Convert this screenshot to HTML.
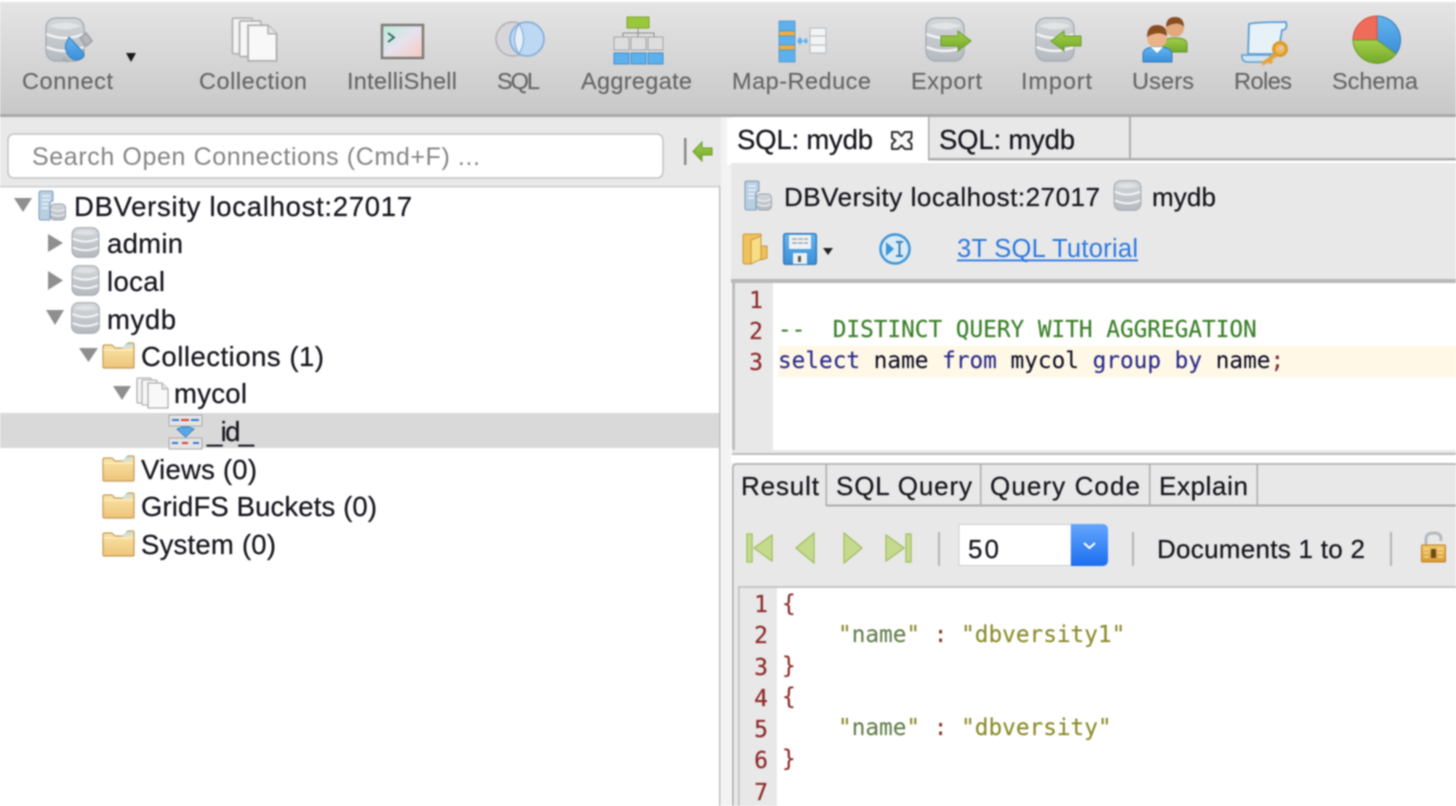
<!DOCTYPE html>
<html><head><meta charset="utf-8"><title>3T Studio</title>
<style>
html,body{margin:0;padding:0;background:#fff;width:1456px;height:806px;overflow:hidden}
svg{display:block;filter:blur(.7px)}
text{font-family:"Liberation Sans",sans-serif;white-space:pre}
.tb{font-size:23.5px;fill:#666667;stroke:#666667;stroke-width:.15px}
.t{font-size:27.5px;fill:#17171f;stroke:#17171f;stroke-width:.25px}
.t2{font-size:26px}
.m{font-family:"DejaVu Sans Mono","Liberation Mono",monospace;font-size:22.72px;stroke:currentColor;stroke-width:.15px}
.ln{fill:#8e2a2a;font-family:"DejaVu Sans Mono","Liberation Mono",monospace;font-size:23px;text-anchor:end;stroke:#8e2a2a;stroke-width:.2px}
</style></head><body>
<svg width="1456" height="806" viewBox="0 0 1456 806" xmlns="http://www.w3.org/2000/svg">
<defs>
<linearGradient id="tbg" x1="0" y1="0" x2="0" y2="1"><stop offset="0" stop-color="#e5e4e5"/><stop offset="1" stop-color="#c8c8c8"/></linearGradient>
<linearGradient id="silver" x1="0" y1="0" x2="0" y2="1"><stop offset="0" stop-color="#d4d7da"/><stop offset="1" stop-color="#b4bac0"/></linearGradient>
<linearGradient id="foldgrad" x1="0" y1="0" x2="0" y2="1"><stop offset="0" stop-color="#fbe6ad"/><stop offset="1" stop-color="#edc477"/></linearGradient>
<linearGradient id="green" x1="0" y1="0" x2="0" y2="1"><stop offset="0" stop-color="#a3cf4a"/><stop offset="1" stop-color="#72a92a"/></linearGradient>
<linearGradient id="blue" x1="0" y1="0" x2="0" y2="1"><stop offset="0" stop-color="#63b4ee"/><stop offset="1" stop-color="#3c8fd8"/></linearGradient>
<linearGradient id="combo" x1="0" y1="0" x2="0" y2="1"><stop offset="0" stop-color="#63a6fb"/><stop offset="1" stop-color="#1c6ef0"/></linearGradient>
<linearGradient id="shell" x1="0" y1="0" x2="1" y2="1"><stop offset="0" stop-color="#b9ecd9"/><stop offset=".5" stop-color="#e6e2ee"/><stop offset="1" stop-color="#f8c9bd"/></linearGradient>
<linearGradient id="gold" x1="0" y1="0" x2="0" y2="1"><stop offset="0" stop-color="#f1c662"/><stop offset="1" stop-color="#d99a36"/></linearGradient>

<symbol id="db" viewBox="0 0 29 32">
<rect x=".7" y=".7" width="27.6" height="30.6" rx="7" fill="url(#silver)" stroke="#a6acb2" stroke-width="1.2"/>
<path d="M3 6Q14.5 1 26 6Q14.5 11 3 6Z" fill="#dfe1e3"/>
<path d="M1.5 12Q14.5 18 27.5 12" fill="none" stroke="#f4f5f6" stroke-width="2"/>
<path d="M1.5 21Q14.5 27 27.5 21" fill="none" stroke="#f4f5f6" stroke-width="2"/>
</symbol>

<symbol id="bigdb" viewBox="0 0 40 45">
<rect x="1" y="1" width="38" height="43" rx="10" fill="url(#silver)" stroke="#a6acb2" stroke-width="1.4"/>
<path d="M4 9Q20 2 36 9Q20 16 4 9Z" fill="#e1e3e5"/>
<path d="M1.5 17Q20 25 38.5 17" fill="none" stroke="#f2f3f4" stroke-width="2.5"/>
<path d="M1.5 30Q20 38 38.5 30" fill="none" stroke="#f2f3f4" stroke-width="2.5"/>
</symbol>

<symbol id="folder" viewBox="0 0 33 27">
<path d="M1 4.5Q1 3 3 3H10L13 6H21L26 1H31Q32 1 32 3V25Q32 26 31 26H2Q1 26 1 25Z" fill="url(#foldgrad)" stroke="#c49b58" stroke-width="1.2"/>
<path d="M19 6L25 2H31V4L24 6Z" fill="#bfe3ee"/>
<path d="M1.5 8H31.5" stroke="#fff3cf" stroke-width="1"/>
</symbol>

<symbol id="server" viewBox="0 0 28 31">
<path d="M1 3Q1 1 3 1H13Q15 1 15 3V11H14Q12 12 12 15V30H3Q1 30 1 28Z" fill="#b8cfe2" stroke="#7f9db8"/>
<path d="M4 6H12M4 10H12M4 14H10M4 18H10" stroke="#edf3f8" stroke-width="1.6"/>
<rect x="12.5" y="14" width="15" height="16" rx="4" fill="url(#silver)" stroke="#94a3b0"/>
<path d="M13 19Q20 23 27 19M13 24Q20 28 27 24" fill="none" stroke="#eef0f2" stroke-width="1.2"/>
</symbol>

<symbol id="docs" viewBox="0 0 33 32">
<rect x="1" y="1" width="14" height="25" rx="1" fill="#f3f3f3" stroke="#b4b4b4" stroke-width="1.3"/>
<rect x="6" y="3" width="15" height="25" rx="1" fill="#f6f6f6" stroke="#b4b4b4" stroke-width="1.3"/>
<path d="M12 6H26L32 12V31H12Z" fill="#f8f8f8" stroke="#aeaeae" stroke-width="1.3"/>
<path d="M26 6V12H32" fill="#e3e3e3" stroke="#aeaeae"/>
</symbol>

<symbol id="arrowr" viewBox="0 0 32 22">
<path d="M1 6H18V1L31 11L18 21V16H1Z" fill="url(#green)" stroke="#6a9a2c" stroke-width="1"/>
</symbol>
</defs>

<!-- page base -->
<rect width="1456" height="806" fill="#fff"/>

<!-- toolbar -->
<rect x="0" y="2" width="1456" height="112" fill="url(#tbg)"/>
<rect x="0" y="114" width="1456" height="3" fill="#a9a9a9"/>

<!-- left panel head -->
<rect x="0" y="117" width="721" height="69" fill="#e9e9e9"/>
<rect x="8" y="134" width="655" height="44" rx="6" fill="#fff" stroke="#c4c4c4" stroke-width="1.5"/>
<text x="32" y="165" font-size="25" fill="#858585" textLength="448">Search Open Connections (Cmd+F) ...</text>
<rect x="684" y="138" width="2.5" height="27" fill="#8a8a8a"/>
<g transform="translate(692,141)"><path d="M20 7H10V1L1 10.500L10 20V14H20Z" fill="url(#green)" stroke="#6a9a2c"/></g>

<!-- tree -->
<rect x="0" y="186" width="720" height="1.5" fill="#cfcfcf"/>
<rect x="719" y="186" width="1.5" height="620" fill="#bdbdbd"/>
<rect x="721" y="117" width="10" height="689" fill="#f3f3f3"/>
<rect x="0" y="413" width="719" height="35" fill="#d9d9d9"/>

<g fill="#8f8f8f">
<path d="M14 198H32L23 212Z"/>
<path d="M48 234L63 243L48 252Z"/>
<path d="M48 271L63 280.500L48 290Z"/>
<path d="M46 310H64L55 325Z"/>
<path d="M79 348H98L88.500 362Z"/>
<path d="M113 386H131L122 400Z"/>
</g>

<use href="#server" x="38" y="190" width="28" height="31"/>
<use href="#db" x="71" y="227" width="29" height="31"/>
<use href="#db" x="71" y="265" width="29" height="31"/>
<use href="#db" x="71" y="302" width="29" height="32"/>
<use href="#folder" x="102" y="342" width="33" height="27"/>
<use href="#docs" x="136" y="377" width="33" height="32"/>
<use href="#folder" x="102" y="455" width="33" height="27"/>
<use href="#folder" x="102" y="492" width="33" height="27"/>
<use href="#folder" x="102" y="530" width="33" height="27"/>

<!-- index icon -->
<g transform="translate(169,415)">
<rect x="0" y="0" width="33" height="11" fill="#e4e4e4" stroke="#a8a8a8"/>
<rect x="0" y="23" width="33" height="11" fill="#e4e4e4" stroke="#a8a8a8"/>
<path d="M3 5H10M22 5H30M3 28H9M24 28H30" stroke="#2f78d6" stroke-width="2"/>
<path d="M12 5H20M13 28H19" stroke="#e03a3a" stroke-width="2"/>
<path d="M8 14L16.500 22L25 14L20 12H13Z" fill="#5aa7e6" stroke="#3b84c4"/>
</g>

<text class="t" x="74" y="216" textLength="338">DBVersity localhost:27017</text>
<text class="t" x="107" y="253" textLength="76">admin</text>
<text class="t" x="107" y="291" textLength="58">local</text>
<text class="t" x="107" y="329" textLength="69">mydb</text>
<text class="t" x="141" y="366" textLength="183">Collections (1)</text>
<text class="t" x="174" y="403" textLength="73">mycol</text>
<text class="t" x="207" y="441" textLength="47">_id_</text>
<text class="t" x="141" y="479" textLength="116">Views (0)</text>
<text class="t" x="141" y="516" textLength="236">GridFS Buckets (0)</text>
<text class="t" x="141" y="554" textLength="135">System (0)</text>

<!-- right: tabs -->
<rect x="928" y="117" width="528" height="41" fill="#e8e8e8"/>
<rect x="928" y="158" width="528" height="2.5" fill="#adadad"/>
<rect x="1129" y="117" width="2" height="41" fill="#adadad"/>
<rect x="928" y="117" width="1.5" height="43" fill="#adadad"/>
<path d="M727 165V118H924Q927 118 927 121V165Z" fill="#fff"/>
<rect x="731" y="163" width="725" height="117" fill="#e8e8e8"/>
<rect x="731" y="279" width="725" height="4" fill="#b9b9b9"/>
<text class="t" x="737" y="149" textLength="136">SQL: mydb</text>
<text class="t" x="939" y="149" textLength="136">SQL: mydb</text>
<path d="M892 132H898L901.500 136L905 132H911.500V138L908 140.500L911.500 144V149H905L901.500 145.500L898 149H892V144L895.500 140.500L892 138Z" fill="#fafafa" stroke="#333" stroke-width="2" stroke-linejoin="round"/>

<use href="#server" x="744" y="180" width="28" height="31"/>
<text class="t t2" x="784" y="206" textLength="316">DBVersity localhost:27017</text>
<use href="#db" x="1113" y="180" width="29" height="31"/>
<text class="t t2" x="1152" y="206" textLength="64">mydb</text>

<!-- editor toolbar icons -->
<g transform="translate(742,233)">
<path d="M1 3Q1 1 3 1H19V23L8 31H3Q1 31 1 29Z" fill="#f0c25c" stroke="#c9973c"/>
<path d="M9 7L19 3V26L9 31Z" fill="#f8dd84" stroke="#c9973c"/>
<path d="M19 13H25V25L19 27Z" fill="#eec05a" stroke="#c9973c"/>
</g>
<g transform="translate(783,233)">
<rect x=".7" y=".7" width="32.600" height="30.600" rx="2" fill="url(#blue)" stroke="#2c76b8" stroke-width="1.400"/>
<rect x="6" y="2" width="22" height="14" fill="#f0f2f4"/>
<path d="M9 6H25M9 10H25" stroke="#9aa2aa" stroke-width="1.600" stroke-dasharray="5 1"/>
<rect x="10" y="20" width="14" height="11" fill="#eef0f2"/>
<rect x="15" y="23" width="3" height="6" fill="#555"/>
</g>
<path d="M823 248H833L828 255Z" fill="#222"/>
<g transform="translate(879,233)">
<circle cx="16" cy="16" r="14.500" fill="#d7ebf8" stroke="#3f95d6" stroke-width="2.500"/>
<path d="M7 9L15 16L7 23Z" fill="#3f95d6"/>
<path d="M17 9H24M20.500 9V23M17 23H24" stroke="#3f7fb6" stroke-width="2" fill="none"/>
</g>
<text x="957" y="257" font-size="25.500" fill="#2d78e0" textLength="181">3T SQL Tutorial</text>
<rect x="957" y="259.500" width="181" height="1.800" fill="#2d78e0"/>

<!-- sql editor -->
<rect x="732" y="283" width="3" height="172" fill="#bcbcbc"/>
<rect x="735" y="283" width="38" height="167" fill="#e8e8e8"/>
<rect x="773" y="283" width="683" height="167" fill="#fff"/>
<rect x="732" y="450" width="724" height="3" fill="#e8e8e8"/>
<rect x="732" y="453" width="724" height="2" fill="#bcbcbc"/>
<rect x="778" y="346" width="678" height="31" fill="#fff8e6"/>
<text class="ln" x="763" y="308">1</text>
<text class="ln" x="763" y="339">2</text>
<text class="ln" x="763" y="370">3</text>
<text class="m" x="778" y="337" fill="#3a7f28" color="#3a7f28">--  DISTINCT QUERY WITH AGGREGATION</text>
<text class="m" x="778" y="368" fill="#2b2b8c" color="#2b2b8c">select <tspan fill="#101018">name</tspan> from <tspan fill="#101018">mycol</tspan> group by <tspan fill="#101018">name</tspan><tspan fill="#8e2a2a">;</tspan></text>

<!-- result tabs -->
<rect x="732" y="463" width="724" height="343" fill="#e8e8e8"/>
<path d="M732.800 806V468Q732.800 464 737 464H1456" fill="none" stroke="#adadad" stroke-width="1.600"/>
<rect x="826" y="504.500" width="630" height="2" fill="#adadad"/>
<rect x="825.500" y="464" width="1.500" height="42" fill="#adadad"/>
<rect x="980" y="464" width="1.500" height="41" fill="#adadad"/>
<rect x="1149" y="464" width="1.500" height="41" fill="#adadad"/>
<rect x="1256.500" y="464" width="1.500" height="41" fill="#adadad"/>
<text class="t t2" x="741" y="495" textLength="78">Result</text>
<text class="t t2" x="836" y="495" textLength="136">SQL Query</text>
<text class="t t2" x="990" y="495" textLength="150">Query Code</text>
<text class="t t2" x="1159" y="495" textLength="89">Explain</text>

<!-- pager -->
<g fill="#c6da8e" stroke="#a9c26c" stroke-width="1.500" stroke-linejoin="round">
<rect x="747" y="534" width="5" height="28"/>
<path d="M772 535V561L754 548Z"/>
<path d="M814 533V563L796 548Z"/>
<path d="M844 533V563L862 548Z"/>
<path d="M886 535V561L904 548Z"/>
<rect x="906" y="534" width="5" height="28"/>
</g>
<rect x="938" y="532" width="2" height="34" fill="#b4b4b4"/>
<rect x="959" y="524.500" width="112" height="41" fill="#fff" stroke="#cfcfcf"/>
<path d="M1071 524H1102Q1108 524 1108 530V560Q1108 566 1102 566H1071Z" fill="url(#combo)"/>
<path d="M1084 543L1089.500 548L1095 543" fill="none" stroke="#fff" stroke-width="2"/>
<text class="t t2" x="968" y="558" textLength="31">50</text>
<rect x="1132" y="532" width="2" height="34" fill="#b4b4b4"/>
<text class="t t2" x="1157" y="558" textLength="208">Documents 1 to 2</text>
<rect x="1390" y="532" width="2" height="34" fill="#b4b4b4"/>
<path d="M1426 546V539Q1426 533 1434 533Q1441 533 1441 539V541" fill="none" stroke="#b5bac0" stroke-width="3"/>
<rect x="1421.500" y="545" width="24" height="17" rx="1" fill="url(#gold)" stroke="#b8802c"/>
<rect x="1431" y="549" width="5" height="9" fill="#6a4a1a"/>
<path d="M1424 549H1429M1424 553H1429M1424 557H1429M1438 549H1443M1438 553H1443M1438 557H1443" stroke="#f7dc96" stroke-width="1.200"/>

<!-- result editor -->
<rect x="738" y="586" width="718" height="220" fill="#fff"/>
<rect x="738" y="586" width="718" height="2" fill="#c6c6c6"/>
<rect x="738" y="586" width="1.800" height="220" fill="#c2c2c2"/>
<rect x="740" y="588" width="37" height="218" fill="#e8e8e8"/>
<text class="ln" x="768" y="612">1</text>
<text class="ln" x="768" y="643">2</text>
<text class="ln" x="768" y="675">3</text>
<text class="ln" x="768" y="706">4</text>
<text class="ln" x="768" y="737">5</text>
<text class="ln" x="768" y="768">6</text>
<text class="ln" x="768" y="800">7</text>
<text class="m" x="782" y="611" fill="#8e2a2a" color="#8e2a2a">{</text>
<text class="m" x="838" y="642" fill="#8c8c2c" color="#8c8c2c">"<tspan fill="#5f7f58">name</tspan>" <tspan fill="#8e2a2a">:</tspan> "dbversity1"</text>
<text class="m" x="782" y="673" fill="#8e2a2a" color="#8e2a2a">}</text>
<text class="m" x="782" y="704" fill="#8e2a2a" color="#8e2a2a">{</text>
<text class="m" x="838" y="735" fill="#8c8c2c" color="#8c8c2c">"<tspan fill="#5f7f58">name</tspan>" <tspan fill="#8e2a2a">:</tspan> "dbversity"</text>
<text class="m" x="782" y="766" fill="#8e2a2a" color="#8e2a2a">}</text>

<!-- toolbar labels -->
<text class="tb" x="22" y="89" textLength="91">Connect</text>
<text class="tb" x="199" y="89" textLength="108">Collection</text>
<text class="tb" x="347" y="89" textLength="110">IntelliShell</text>
<text class="tb" x="497" y="89" textLength="43">SQL</text>
<text class="tb" x="581" y="89" textLength="111">Aggregate</text>
<text class="tb" x="732" y="89" textLength="139">Map-Reduce</text>
<text class="tb" x="911" y="89" textLength="71">Export</text>
<text class="tb" x="1021" y="89" textLength="71">Import</text>
<text class="tb" x="1132" y="89" textLength="62">Users</text>
<text class="tb" x="1234" y="89" textLength="58">Roles</text>
<text class="tb" x="1332" y="89" textLength="86">Schema</text>

<!-- Connect -->
<use href="#bigdb" x="45" y="17" width="40" height="45"/>
<path d="M80 38L86 33L92 41L86 46ZM63 58L68 62" stroke="#a4a8ac" stroke-width="2" fill="#b4b8bc"/>
<path d="M69 37L83 52Q86 56 81 59Q74 62 69 56Q64 50 66 43Z" fill="url(#blue)" stroke="#3b7fbc"/>
<path d="M126 53H136L131 62Z" fill="#1a1a1a"/>

<!-- Collection -->
<use href="#docs" x="231" y="16" width="47" height="47"/>

<!-- IntelliShell -->
<rect x="382" y="25" width="41" height="33" fill="url(#shell)" stroke="#807c78" stroke-width="2.500"/>
<path d="M388 33L394 37.500L388 42" fill="none" stroke="#2d6a5a" stroke-width="1.800"/>
<rect x="381" y="60" width="43" height="1.500" fill="#d8d8d8"/>

<!-- SQL -->
<ellipse cx="513" cy="39" rx="17" ry="17" fill="#d6d6d8" stroke="#b0b0b2" stroke-width="1.500"/>
<ellipse cx="527" cy="39" rx="17" ry="17" fill="#bcd8f2" stroke="#7ea8da" stroke-width="1.500"/>
<path d="M519 24Q528 39 519 54Q510 39 519 24Z" fill="#e6eef6" stroke="#7ea8da"/>

<!-- Aggregate -->
<rect x="627" y="17" width="22" height="11" fill="#9ac83a" stroke="#7da42e"/>
<path d="M638 28V37M623 37V33H654V37" stroke="#8c8c8c" fill="none"/>
<g fill="#dddddd" stroke="#a4a4a4"><rect x="614" y="37" width="15" height="13"/><rect x="631" y="37" width="15" height="13"/><rect x="648" y="37" width="15" height="13"/></g>
<g fill="#5cb1ec" stroke="#3f8fcc"><rect x="614" y="53" width="15" height="11"/><rect x="631" y="53" width="15" height="11"/><rect x="648" y="53" width="15" height="11"/></g>

<!-- Map-Reduce -->
<g stroke="#4f93cc" stroke-width=".8">
<rect x="779" y="21" width="16" height="10" fill="#5cb1ec"/>
<rect x="779" y="31" width="16" height="5" fill="#f3ad3c"/>
<rect x="779" y="36" width="16" height="9" fill="#5cb1ec"/>
<rect x="779" y="45" width="16" height="5" fill="#f3ad3c"/>
<rect x="779" y="50" width="16" height="12" fill="#5cb1ec"/>
</g>
<path d="M797 41L800 37L803 41L800 45ZM803 41L806 38L808 41L806 44Z" fill="#5cb1ec"/>
<g fill="#f1f3f4" stroke="#b4b8bc"><rect x="810" y="28" width="16" height="8"/><rect x="810" y="36" width="16" height="9"/><rect x="810" y="45" width="16" height="8"/></g>

<!-- Export/Import -->
<use href="#bigdb" x="925" y="17" width="40" height="45"/>
<use href="#arrowr" x="940" y="30" width="32" height="22"/>
<use href="#bigdb" x="1035" y="17" width="40" height="45"/>
<g transform="translate(1082,30) scale(-1,1)"><use href="#arrowr" width="32" height="22"/></g>

<!-- Users -->
<circle cx="1175" cy="28" r="9" fill="#e2aa7c"/>
<path d="M1166 27Q1166 17 1175 17Q1184 17 1184 27Q1178 20 1166 27Z" fill="#8a4f20"/>
<path d="M1163 52V44Q1163 38 1175 38Q1187 38 1187 44V52Z" fill="url(#green)" stroke="#6a8f2e"/>
<circle cx="1157" cy="38" r="10" fill="#eab48a"/>
<path d="M1147 37Q1147 25 1157 25Q1167 25 1167 36Q1158 30 1147 37Z" fill="#8a4f20"/>
<path d="M1143 62V54Q1143 47 1157 47Q1172 47 1172 54V62Z" fill="url(#blue)" stroke="#3079bb"/>
<path d="M1151 47L1157 53L1163 47Z" fill="#fff"/>

<!-- Roles -->
<path d="M1249 24Q1255 22 1286 22Q1288 30 1282 30L1278 54H1248Z" fill="#e6f1f8" stroke="#5e9fd6" stroke-width="1.800"/>
<path d="M1242 55H1270V62H1246Q1241 60 1242 55Z" fill="#cfe4f3" stroke="#5e9fd6" stroke-width="1.500"/>
<circle cx="1280" cy="49" r="6.500" fill="#f0b84e" stroke="#dc9a30" stroke-width="3"/>
<circle cx="1281" cy="48" r="2" fill="#cfcfcf"/>
<path d="M1276 55L1262 64M1268 59L1272 63" stroke="#e6a43a" stroke-width="4"/>

<!-- Schema -->
<path d="M1377 40V16A24 24 0 0 1 1396 54Z" fill="url(#blue)" stroke="#3079bb"/>
<path d="M1377 40V16A24 24 0 0 0 1353 40Z" fill="#ef6b5a" stroke="#cf5444"/>
<path d="M1377 40H1353A24 24 0 0 0 1396 54Z" fill="url(#green)" stroke="#6e9a2c"/>
</svg>
</body></html>
